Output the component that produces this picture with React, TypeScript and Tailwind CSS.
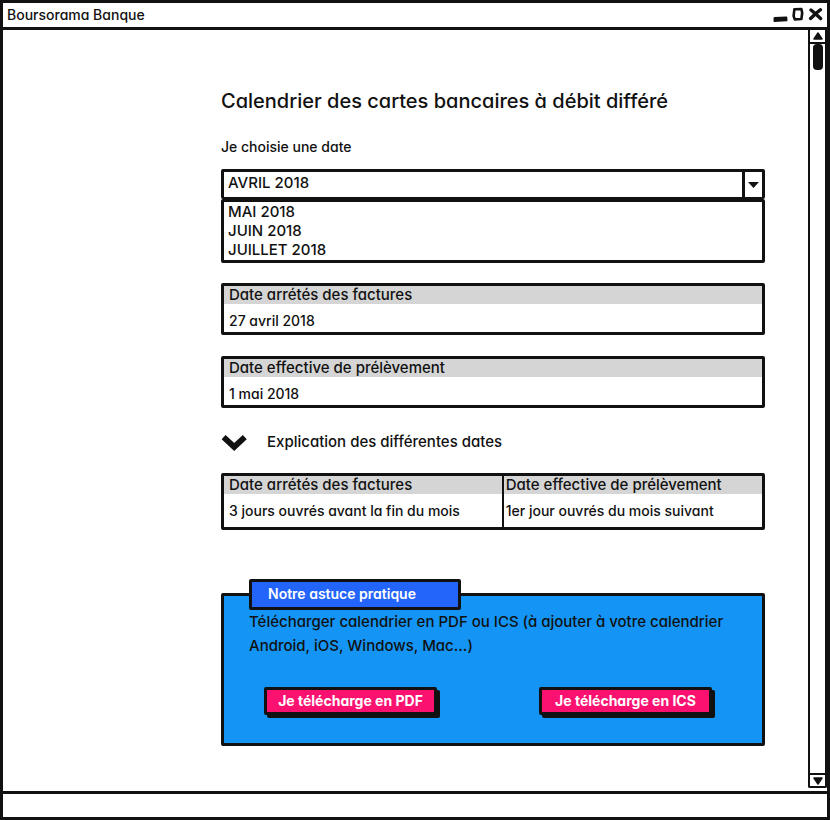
import { useState } from "react";

const months = ["MAI 2018", "JUIN 2018", "JUILLET 2018"];

function DateCard({ title, value }: { title: string; value: string }) {
  return (
    <table className="w-full border-separate border-spacing-0 rounded-xs border-3 border-[#111] text-left">
      <thead>
        <tr>
          <th scope="col" className="h-[18px] bg-[#d5d5d5] px-[5px] py-0 text-[15px] leading-[18px] font-medium">
            {title}
          </th>
        </tr>
      </thead>
      <tbody>
        <tr>
          <td className="px-[5px] pt-1.5 pb-0 leading-[22px]">{value}</td>
        </tr>
      </tbody>
    </table>
  );
}

function TitleBar() {
  return (
    <header className="flex h-[27px] items-center justify-between border-b-3 border-[#111] pr-1 pb-0.5 pl-1">
      <h1>Boursorama Banque</h1>
      <div className="flex items-center gap-1">
        <button type="button" aria-label="Réduire">
          <svg width="15" height="16" viewBox="0 0 15 16">
            <path d="M1.5 12 13.4 11.4 13.6 14.4 1.4 15Z" fill="#111" stroke="#111" strokeWidth="1.8" strokeLinejoin="round" />
          </svg>
        </button>
        <button type="button" aria-label="Agrandir">
          <svg width="12" height="16" viewBox="0 0 12 16">
            <path d="M2.4 3.2 9.4 3 10.2 7 9.4 13 2.8 13.4 1.6 10Z" fill="none" stroke="#111" strokeWidth="2.6" strokeLinejoin="round" />
          </svg>
        </button>
        <button type="button" aria-label="Fermer">
          <svg width="15" height="16" viewBox="0 0 15 16">
            <path d="M3 4 7.5 7.8 12.6 12.6M12.4 3.8 7.5 7.8 2.6 12.4" fill="none" stroke="#111" strokeWidth="3.4" strokeLinecap="round" />
          </svg>
        </button>
      </div>
    </header>
  );
}

function ScrollRail() {
  return (
    <div className="mb-[3px] flex w-[19px] shrink-0 flex-col rounded-b-xs border-x-2 border-b-2 border-[#111]">
      <button type="button" aria-label="Défiler vers le haut" className="flex h-[14px] items-center justify-center border-b-2 border-[#111]">
        <svg width="10" height="8" viewBox="0 0 10 8">
          <path d="M5 1 9 7H1Z" fill="#111" stroke="#111" strokeWidth="1.5" strokeLinejoin="round" />
        </svg>
      </button>
      <div className="flex flex-1 justify-center">
        <div className="h-[26px] w-[10px] rounded-sm bg-[#111]" />
      </div>
      <button type="button" aria-label="Défiler vers le bas" className="flex h-[13px] items-center justify-center border-t-2 border-[#111]">
        <svg width="10" height="8" viewBox="0 0 10 8">
          <path d="M1 1H9L5 7Z" fill="#111" stroke="#111" strokeWidth="1.5" strokeLinejoin="round" />
        </svg>
      </button>
    </div>
  );
}

function DownloadButton({ label }: { label: string }) {
  return (
    <button
      type="button"
      className="h-[28px] w-[173px] rounded-xs border-3 border-[#111] bg-[#fb1270] leading-[22px] font-bold whitespace-nowrap text-white shadow-[3px_3px_0_#111]"
    >
      {label}
    </button>
  );
}

export default function App() {
  const [open, setOpen] = useState(true);

  return (
    <div className="flex min-h-screen flex-col border-3 border-[#111] bg-white font-['Inter',sans-serif] text-[14px] font-medium text-[#111] [font-feature-settings:'cv11']">
      <TitleBar />

      <div className="flex flex-1">
        <main className="min-w-0 flex-1 pt-[58px] pr-[43px] pb-10 pl-[218px]">
          <h2 className="text-[20px] leading-[26px]">Calendrier des cartes bancaires à débit différé</h2>

          <label htmlFor="mois" className="mt-[23px] block leading-5">
            Je choisie une date
          </label>
          <div className="mt-3 flex h-[30px] rounded-xs border-3 border-b-2 border-[#111]">
            <select id="mois" className="min-w-0 flex-1 appearance-none bg-white px-1 pb-0.5 text-[15px] outline-none">
              <option>AVRIL 2018</option>
              {months.map((month) => (
                <option key={month}>{month}</option>
              ))}
            </select>
            <span className="flex w-5 items-center justify-center border-l-3 border-[#111]">
              <svg width="11" height="6" viewBox="0 0 11 6">
                <path d="M0 0H11L5.5 6Z" fill="#111" />
              </svg>
            </span>
          </div>
          <ul className="rounded-xs border-3 border-[#111] px-1 pb-px text-[15px] leading-[19px]">
            {months.map((month) => (
              <li key={month}>{month}</li>
            ))}
          </ul>

          <div className="mt-5 flex flex-col gap-[21px]">
            <DateCard title="Date arrétés des factures" value="27 avril 2018" />
            <DateCard title="Date effective de prélèvement" value="1 mai 2018" />
          </div>

          <button
            type="button"
            aria-expanded={open}
            onClick={() => setOpen(!open)}
            className="mt-6 flex h-5 items-center gap-5 text-[15px]"
          >
            <svg width="26" height="18" viewBox="0 0 26 18">
              <path d="M2.6 4.2 13.2 14 23.8 4.2" fill="none" stroke="#111" strokeWidth="5.8" />
            </svg>
            Explication des différentes dates
          </button>

          {open && (
            <table className="mt-[21px] w-full table-fixed border-separate border-spacing-0 rounded-xs border-3 border-[#111] text-left">
              <thead>
                <tr>
                  <th scope="col" className="h-[18px] w-[52%] border-r-2 border-[#111] bg-[#d5d5d5] px-[5px] py-0 text-[15px] leading-[18px] font-medium">
                    Date arrétés des factures
                  </th>
                  <th scope="col" className="bg-[#d5d5d5] px-[2px] py-0 text-[15px] leading-[18px] font-medium">
                    Date effective de prélèvement
                  </th>
                </tr>
              </thead>
              <tbody>
                <tr>
                  <td className="h-[33px] border-r-2 border-[#111] px-[5px] py-0">3 jours ouvrés avant la fin du mois</td>
                  <td className="px-[2px] py-0">1er jour ouvrés du mois suivant</td>
                </tr>
              </tbody>
            </table>
          )}

          <section className="mt-[63px] rounded-xs border-3 border-[#111] bg-[#1495f5] pb-7">
            <h3 className="-mt-[17px] ml-[25px] h-[31px] w-[212px] rounded-xs border-3 border-[#111] bg-[#2364fa] px-4 leading-6 font-semibold text-white">
              Notre astuce pratique
            </h3>
            <p className="px-[25px] text-[15px] leading-6">
              Télécharger calendrier en PDF ou ICS (à ajouter à votre calendrier Android, iOS, Windows, Mac...)
            </p>
            <div className="mt-[29px] flex justify-between pr-[50px] pl-10">
              <DownloadButton label="Je télécharge en PDF" />
              <DownloadButton label="Je télécharge en ICS" />
            </div>
          </section>
        </main>
        <ScrollRail />
      </div>

      <footer className="h-[26px] border-t-3 border-[#111]" />
    </div>
  );
}
